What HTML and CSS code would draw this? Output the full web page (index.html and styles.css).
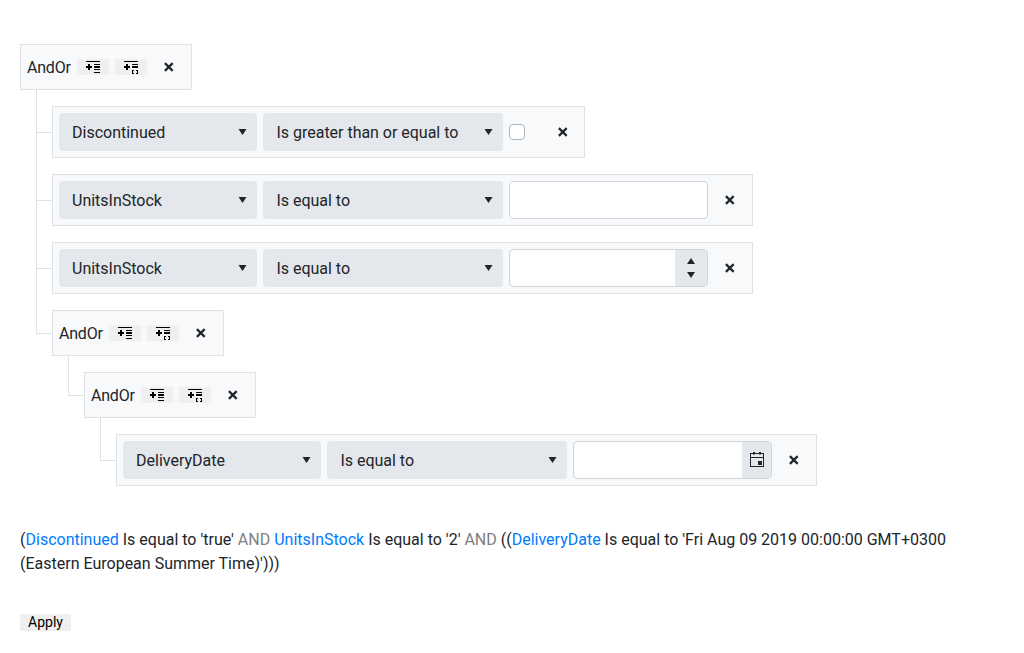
FILE: index.html
```html
<!DOCTYPE html>
<html lang="en">
<head>
<meta charset="utf-8">
<title>Query Builder</title>
<link rel="stylesheet" href="styles.css">
</head>
<body>
<svg class="defs" aria-hidden="true">
  <symbol id="caret" viewBox="0 0 8 6"><path d="M0 0h8L4 6z"/></symbol>
  <symbol id="close" viewBox="0 0 10 10"><path d="M.9 1.1l7.8 7.8M8.7 1.1L.9 8.9" fill="none" stroke="currentColor" stroke-width="2.2"/></symbol>
  <symbol id="add-rule" viewBox="0 0 16 16"><path d="M1 2h14v1H1zM9 5h6v1H9zM9 7h6v2H9zM9 10h6v1H9zM9 13h6v1H9zM1 7h2V5h2v2h2v2H5v2H3V9H1z"/></symbol>
  <symbol id="add-group" viewBox="0 0 16 16"><path d="M1 2h14v1H1zM9 5h6v1H9zM9 7h6v2H9zM1 7h2V5h2v2h2v2H5v2H3V9H1zM9 11h2v1h-1v2h1v1H9zM13 11h2v4h-2v-1h1v-2h-1z"/></symbol>
  <symbol id="calendar" viewBox="0 0 16 16"><path d="M1 1h14v14H1zM2 2v3h12V2zM2 6v8h12V6z" fill-rule="evenodd"/><path d="M4 0h2v2.5H4zM10 0h2v2.5h-2zM9 9h4v4H9z"/></symbol>
</svg>
<main class="builder">
  <div class="bar group">
    <span class="logic">AndOr</span>
    <button class="add"><svg><use href="#add-rule"/></svg></button>
    <button class="add"><svg><use href="#add-group"/></svg></button>
    <button class="remove"><svg><use href="#close"/></svg></button>
  </div>
  <ul class="lines">
    <li class="rule"><div class="bar">
      <div class="select field"><span>Discontinued</span><svg><use href="#caret"/></svg></div>
      <div class="select operator"><span>Is greater than or equal to</span><svg><use href="#caret"/></svg></div>
      <span class="check"></span>
      <button class="remove"><svg><use href="#close"/></svg></button>
    </div></li>
    <li class="rule"><div class="bar">
      <div class="select field"><span>UnitsInStock</span><svg><use href="#caret"/></svg></div>
      <div class="select operator"><span>Is equal to</span><svg><use href="#caret"/></svg></div>
      <div class="input"></div>
      <button class="remove"><svg><use href="#close"/></svg></button>
    </div></li>
    <li class="rule"><div class="bar">
      <div class="select field"><span>UnitsInStock</span><svg><use href="#caret"/></svg></div>
      <div class="select operator"><span>Is equal to</span><svg><use href="#caret"/></svg></div>
      <div class="input"><span class="spinner"><svg class="up"><use href="#caret"/></svg><svg><use href="#caret"/></svg></span></div>
      <button class="remove"><svg><use href="#close"/></svg></button>
    </div></li>
    <li class="nested">
      <div class="bar group">
        <span class="logic">AndOr</span>
        <button class="add"><svg><use href="#add-rule"/></svg></button>
        <button class="add"><svg><use href="#add-group"/></svg></button>
        <button class="remove"><svg><use href="#close"/></svg></button>
      </div>
      <ul class="lines">
        <li class="nested">
          <div class="bar group">
            <span class="logic">AndOr</span>
            <button class="add"><svg><use href="#add-rule"/></svg></button>
            <button class="add"><svg><use href="#add-group"/></svg></button>
            <button class="remove"><svg><use href="#close"/></svg></button>
          </div>
          <ul class="lines">
            <li class="rule"><div class="bar">
              <div class="select field"><span>DeliveryDate</span><svg><use href="#caret"/></svg></div>
              <div class="select operator"><span>Is equal to</span><svg><use href="#caret"/></svg></div>
              <div class="input"><span class="picker"><svg><use href="#calendar"/></svg></span></div>
              <button class="remove"><svg><use href="#close"/></svg></button>
            </div></li>
          </ul>
        </li>
      </ul>
    </li>
  </ul>
</main>
<p class="preview">(<span class="name">Discontinued</span> Is equal to 'true' <span class="and">AND</span> <span class="name">UnitsInStock</span> Is equal to '2' <span class="and">AND</span> ((<span class="name">DeliveryDate</span> Is equal to 'Fri Aug 09 2019 00:00:00 GMT+0300 (Eastern European Summer Time)')))</p>
<button class="apply">Apply</button>
</body>
</html>
```
FILE: styles.css
```css
* { box-sizing: border-box; }
body {
  margin: 0;
  padding: 44px 20px 0;
  background: #fff;
  color: #212529;
  font: 16px/24px Roboto, sans-serif;
}
.defs { display: none; }
svg { display: block; fill: currentColor; flex: none; }
button { margin: 0; border: 0; padding: 0; font-family: inherit; }

.bar {
  display: flex;
  align-items: center;
  gap: 6px;
  width: max-content;
  height: 52px;
  padding: 6px;
  border: 1px solid #dee2e6;
  background: #f8f9fb;
}
.group { height: 46px; }
.logic {
  width: 44px;
  padding-top: 2px;
  letter-spacing: -0.2px;
}
.add {
  display: flex;
  justify-content: center;
  width: 32px;
  height: 16px;
  background: #efefef;
  color: #000;
}
.add svg { width: 16px; height: 16px; }
.remove {
  display: flex;
  align-items: center;
  justify-content: center;
  width: 32px;
  height: 32px;
  background: none;
  color: #212529;
}
.remove svg { width: 10px; height: 10px; }

.lines { list-style: none; margin: 0; padding: 0 0 0 32px; }
.lines > li { position: relative; padding-top: 16px; }
.lines > li::before {
  content: "";
  position: absolute;
  left: -16px;
  top: 0;
  width: 16px;
  height: 42px;
  border: solid #dee2e6;
  border-width: 0 0 1px 1px;
}
.lines > li.nested::before { height: 39px; }
.lines > li:last-child::before { top: 0; }
.lines > li:not(:last-child)::after {
  content: "";
  position: absolute;
  left: -16px;
  top: 0;
  bottom: 0;
  border-left: 1px solid #dee2e6;
}

.select {
  display: flex;
  align-items: center;
  justify-content: space-between;
  height: 38px;
  padding: 0 10px 0 13px;
  border-radius: 4px;
  background: #e4e7eb;
}
.select span { padding-top: 2px; }
.select svg { width: 9px; height: 6px; }
.field { width: 198px; }
.operator { width: 240px; padding-left: 13.5px; letter-spacing: -0.02px; }
.check {
  width: 16px;
  height: 16px;
  margin-right: 15px;
  border: 1px solid #adb5bd;
  border-radius: 4px;
  background: #fff;
}
.check + .remove { padding-left: 1px; }
.input {
  display: flex;
  justify-content: flex-end;
  width: 199px;
  height: 38px;
  border: 1px solid #ced4da;
  border-radius: 4px;
  background: #fff;
  overflow: hidden;
}
.spinner {
  display: flex;
  flex-direction: column;
  align-items: center;
  justify-content: center;
  gap: 8px;
  width: 32px;
  background: #e4e7eb;
}
.spinner svg { width: 8px; height: 6px; }
.spinner .up { transform: rotate(180deg); }
.picker {
  display: flex;
  align-items: center;
  justify-content: center;
  width: 29px;
  background: #e4e7eb;
}
.picker svg { width: 16px; height: 16px; }

.preview { margin: 42px 0 0; }
.name { color: #007bff; }
.and { color: #808080; }
.apply {
  display: block;
  margin-top: 38px;
  width: 51px;
  height: 17px;
  background: #efefef;
  color: #000;
  font-size: 14px;
  line-height: 17px;
}
```
